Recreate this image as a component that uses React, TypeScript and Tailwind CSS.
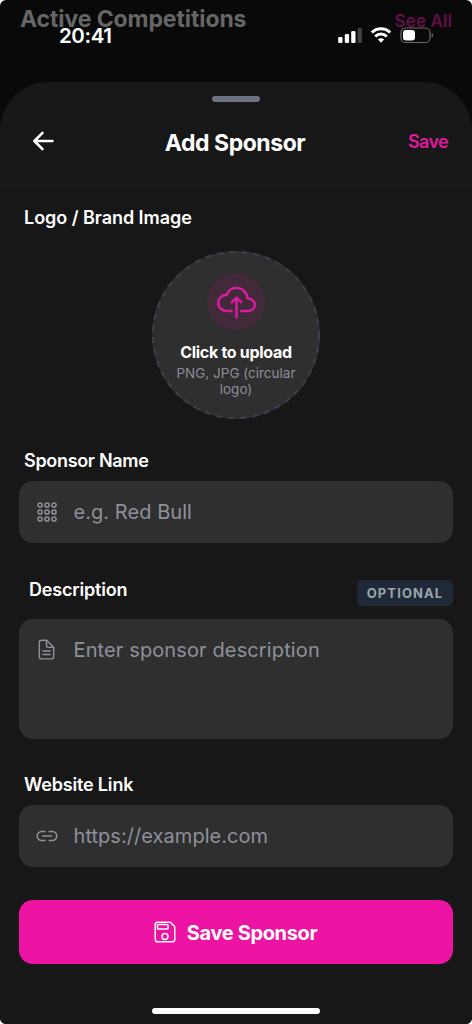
import type {ReactNode} from "react";
import {
    IoCloudUploadOutline,
    IoDocumentTextOutline,
    IoLinkOutline,
    IoSaveOutline,
} from "react-icons/io5";

const DOTS = [4, 11, 18];

function GridIcon() {
    return (
        <svg viewBox="0 0 22 22" className="ml-px size-[22px]" fill="none" stroke="currentColor" strokeWidth="1.5">
            {DOTS.map((y) => DOTS.map((x) => <circle key={`${x}-${y}`} cx={x} cy={y} r="2.1"/>))}
        </svg>
    );
}

function BackIcon() {
    return (
        <svg
            viewBox="0 0 24 24"
            className="size-6"
            fill="none"
            stroke="#fff"
            strokeWidth="2.6"
            strokeLinecap="round"
            strokeLinejoin="round"
        >
            <path d="M11.5 3.8L3.4 12l8.1 8.2M3.8 12h17.6"/>
        </svg>
    );
}

function StatusBar() {
    return (
        <div className="absolute inset-x-0 top-0 h-[70px]">
            <p className="absolute left-[59px] top-[24px] text-[20.5px] leading-6 font-semibold tracking-[-0.4px] text-white">20:41</p>
            <svg className="absolute left-[337px] top-[26px]" width="97" height="18" viewBox="0 0 97 18">
                <rect x="1.2" y="11" width="4.3" height="6" rx="1.3" fill="#fff"/>
                <rect x="7.8" y="8" width="4.3" height="9" rx="1.3" fill="#fff"/>
                <rect x="14.2" y="5" width="4.3" height="12" rx="1.3" fill="#fff"/>
                <rect x="20.6" y="2" width="4.3" height="15" rx="1.3" fill="#424242"/>
                <g fill="none" stroke="#fff" strokeWidth="2.9">
                    <path d="M34.8 6.6a13 13 0 0 1 18.4 0"/>
                    <path d="M38.2 10.4a8.2 8.2 0 0 1 11.6 0"/>
                </g>
                <path d="M44 16.7l-3.1-3.2a4.4 4.4 0 0 1 6.2 0z" fill="#fff"/>
                <rect x="64" y="2" width="29" height="14.5" rx="4.6" fill="none" stroke="#6b6b6b" strokeWidth="1.2"/>
                <rect x="66" y="4" width="12" height="10.6" rx="3" fill="#fff"/>
                <path d="M94.6 7v4.6c1-.4 1.6-1.3 1.6-2.3s-.6-1.9-1.6-2.3z" fill="#6b6b6b"/>
            </svg>
        </div>
    );
}

function Field({icon, placeholder}: { icon: ReactNode; placeholder: string }) {
    return (
        <div className="flex h-[62px] items-center rounded-[14px] bg-[#2f2f2f] pl-4 text-[#8e919b]">
            <span className="flex w-[38.5px] shrink-0">{icon}</span>
            <input
                className="w-full bg-transparent text-[20px] tracking-[0.05px] outline-none placeholder:text-[#8e919b]"
                placeholder={placeholder}
            />
        </div>
    );
}

function App() {
    return (
        <div className="bg-white">
            <div className="relative flex h-[1024px] w-full flex-col overflow-hidden rounded-[6px] bg-[#090909] font-['Inter',sans-serif]">
                {/* Dimmed page behind the sheet */}
                <div className="flex h-[82px] shrink-0 justify-between pl-5 pr-5 pt-[5px]">
                    <h2 className="text-[23px] leading-7 font-bold tracking-[-0.1px] text-[#666]">Active Competitions</h2>
                    <p className="pt-1 text-[17px] leading-6 font-semibold tracking-[0.1px] text-[#640e47]">See All</p>
                </div>

                <StatusBar/>

                <div className="flex flex-1 flex-col rounded-t-[48px] bg-[#171717]">
                    <div className="mx-auto mt-[14px] h-1.5 w-12 rounded-full bg-[#6b7280]"/>

                    <header className="flex h-[83px] items-center justify-between border-b border-[#1e1e1e] pl-[31px] pr-6">
                        <span className="pb-1"><BackIcon/></span>
                        <h1 className="pl-[7px] text-[23px] font-bold tracking-[-0.45px] text-white">Add Sponsor</h1>
                        <button className="pb-[3px] text-[18px] font-semibold tracking-[-0.65px] text-[#e01aa0]">Save</button>
                    </header>

                    <main className="flex flex-col px-[19px] pt-[21px]">
                        <h3 className="pl-[5px] text-[18px] leading-6 font-semibold tracking-[-0.05px] text-white">Logo / Brand Image</h3>

                        <div className="relative mx-auto mt-[21px] flex size-[168px] flex-col items-center rounded-full bg-[#2f2f2f] pt-[22px]">
                            <svg className="absolute inset-0" width="168" height="168" viewBox="0 0 168 168" fill="none">
                                <circle cx="84" cy="84" r="83" stroke="#374151" strokeWidth="2" strokeDasharray="6 6"/>
                            </svg>
                            <div className="flex size-[58px] items-center justify-center rounded-full bg-[#432a3b]">
                                <IoCloudUploadOutline className="size-[39px] text-[#e01aa0]"/>
                            </div>
                            <p className="mt-[11px] text-[16px] leading-5 font-bold tracking-[-0.3px] text-white">Click to upload</p>
                            <p className="mt-[3px] w-[130px] text-center text-[13.5px] leading-4 text-[#8b8e98]">
                                PNG, JPG (circular logo)
                            </p>
                        </div>

                        <h3 className="mt-[30px] pl-[5px] text-[18px] leading-6 font-semibold tracking-[-0.32px] text-white">Sponsor Name</h3>
                        <div className="mt-2">
                            <Field icon={<GridIcon/>} placeholder="e.g. Red Bull"/>
                        </div>

                        <div className="mt-[34px] flex justify-between pl-[10px]">
                            <h3 className="pt-px text-[18px] leading-6 font-semibold tracking-[-0.18px] text-white">Description</h3>
                            <span className="mt-[3px] h-[26px] w-24 rounded-[5px] bg-[#1f2937] text-center text-[13px] leading-[27px] font-bold tracking-[1.1px] text-[#9ca3af]">
                                OPTIONAL
                            </span>
                        </div>
                        <div className="mt-[13px] flex h-[120px] rounded-[14px] bg-[#2f2f2f] pl-4 pt-[18px] text-[#8e919b]">
                            <span className="w-[38.5px] shrink-0 pt-px"><IoDocumentTextOutline className="size-[23px]"/></span>
                            <textarea
                                className="w-full resize-none bg-transparent text-[20px] leading-[26px] tracking-[0.12px] outline-none placeholder:text-[#8e919b]"
                                placeholder="Enter sponsor description"
                            />
                        </div>

                        <h3 className="mt-[34px] pl-[5px] text-[18px] leading-6 font-semibold tracking-[-0.18px] text-white">Website Link</h3>
                        <div className="mt-2">
                            <Field icon={<IoLinkOutline className="size-6"/>} placeholder="https://example.com"/>
                        </div>

                        <button className="mt-[33px] flex h-16 items-center justify-center gap-[10px] rounded-[14px] bg-[#ed13a3] pr-0.5 text-[20px] font-bold tracking-[-0.35px] text-white">
                            <IoSaveOutline className="size-6"/>
                            <span className="pt-0.5">Save Sponsor</span>
                        </button>
                    </main>

                    <div className="mx-auto mt-auto mb-[10px] h-1.5 w-[168px] rounded-full bg-white"/>
                </div>
            </div>
        </div>
    );
}

export default App;
